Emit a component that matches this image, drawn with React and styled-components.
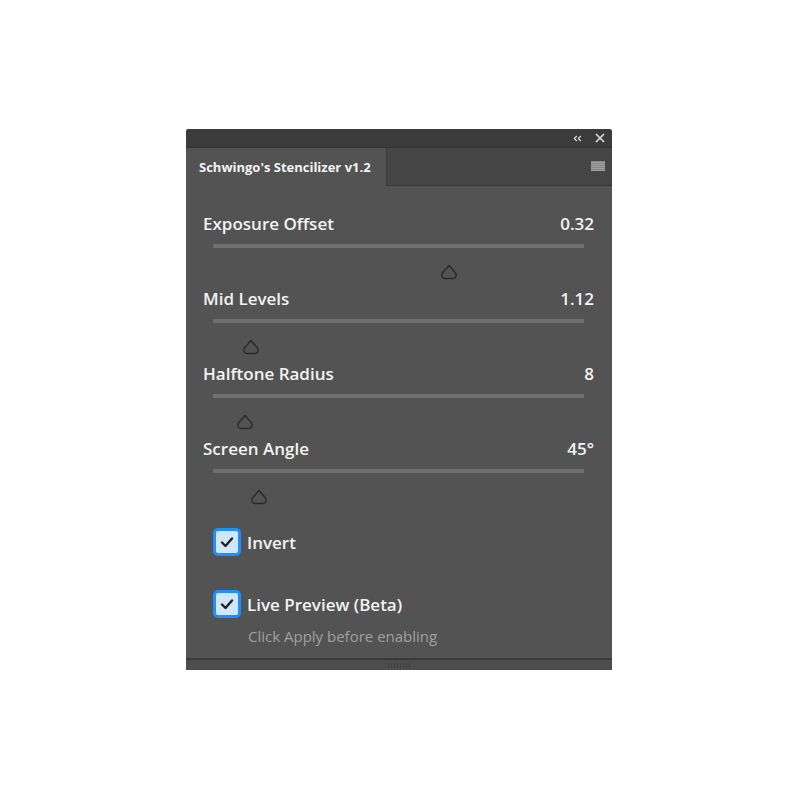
import React from 'react';
import styled, { createGlobalStyle } from 'styled-components';

const GlobalStyle = createGlobalStyle`
  body {
    margin: 0;
    background: #ffffff;
    font-family: "Open Sans", "Noto Sans", sans-serif;
  }
`;

const Page = styled.div`
  width: 800px;
  height: 800px;
  padding: 129px 0 0 186px;
  box-sizing: border-box;
`;

const Panel = styled.div`
  width: 426px;
  height: 541px;
  background: #535353;
  display: flex;
  flex-direction: column;
  border-radius: 3px 3px 0 0;
  overflow: hidden;
`;

const TopBar = styled.div`
  height: 18px;
  background: #3b3b3b;
  border-bottom: 1px solid #333333;
  display: flex;
  align-items: center;
  justify-content: flex-end;
  gap: 13px;
  padding-right: 7px;
  color: #d8d8d8;
`;

const TabRow = styled.div`
  height: 38px;
  display: flex;
  background: #454545;
`;

const Tab = styled.div`
  width: 200px;
  background: #535353;
  color: #f2f2f2;
  font-weight: 700;
  font-size: 13px;
  display: flex;
  align-items: center;
  padding-left: 13px;
  box-sizing: border-box;
`;

const TabFill = styled.div`
  flex: 1;
  border-left: 1px solid #393939;
  border-bottom: 1px solid #393939;
  display: flex;
  align-items: center;
  justify-content: flex-end;
  padding-right: 7px;
`;

const Body = styled.div`
  flex: 1;
  padding: 27px 18px 0 17px;
  display: flex;
  flex-direction: column;
`;

const SliderBlock = styled.div`
  display: flex;
  flex-direction: column;
  height: 75px;
`;

const LabelRow = styled.div`
  display: flex;
  justify-content: space-between;
  color: #f2f2f2;
  font-size: 17px;
  font-weight: 600;
  line-height: 22px;
`;

const Track = styled.div`
  margin: 9px 10px 0;
  height: 4px;
  background: #707070;
`;

const ThumbArea = styled.div`
  position: relative;
  margin: 0 10px;
  height: 40px;
`;

const Thumb = styled.svg`
  position: absolute;
  top: 16px;
  transform: translateX(-50%);
`;

const CheckRow = styled.label`
  display: flex;
  align-items: center;
  gap: 6px;
  margin-left: 10px;
  margin-top: ${(p) => p.$top}px;
  color: #f2f2f2;
  font-size: 17px;
  font-weight: 600;
`;

const Box = styled.span`
  width: 28px;
  height: 28px;
  box-sizing: border-box;
  border: 3px solid #1e8fff;
  border-radius: 5px;
  background: #cfe6fb;
  display: flex;
  align-items: center;
  justify-content: center;
`;

const Hint = styled.div`
  margin-left: 45px;
  margin-top: 8px;
  color: #a0a0a0;
  font-size: 15px;
`;

const Footer = styled.div`
  height: 10px;
  background: #4d4d4d;
  border-top: 2px solid #3a3a3a;
  display: flex;
  justify-content: center;
  align-items: center;
`;

const Grip = styled.div`
  width: 24px;
  height: 5px;
  margin-left: 1px;
  background: repeating-linear-gradient(90deg, #3e3e3e 0 1px, transparent 1px 3px);
`;

const sliders = [
  { label: 'Exposure Offset', value: '0.32', pos: 0.636 },
  { label: 'Mid Levels', value: '1.12', pos: 0.102 },
  { label: 'Halftone Radius', value: '8', pos: 0.086 },
  { label: 'Screen Angle', value: '45°', pos: 0.124 },
];

const Check = () => (
  <svg width="14" height="12" viewBox="0 0 14 12">
    <path d="M2 6.5 L5.5 10 L12 2.5" fill="none" stroke="#222" strokeWidth="2.4" strokeLinecap="round" strokeLinejoin="round" />
  </svg>
);

const App = () => {
  return (
    <Page>
      <GlobalStyle />
      <Panel>
        <TopBar>
          <svg width="9" height="7" viewBox="0 0 9 7">
            <path d="M3.8 1 L1.3 3.5 L3.8 6 M7.8 1 L5.3 3.5 L7.8 6" fill="none" stroke="#dcdcdc" strokeWidth="1.2" />
          </svg>
          <svg width="10" height="10" viewBox="0 0 10 10">
            <path d="M1 1 L9 9 M9 1 L1 9" stroke="#dcdcdc" strokeWidth="1.6" />
          </svg>
        </TopBar>
        <TabRow>
          <Tab>Schwingo's Stencilizer v1.2</Tab>
          <TabFill>
            <svg width="14" height="11" viewBox="0 0 14 11">
              {[0.5, 2.5, 4.5, 6.5, 8.5].map((y) => (
                <rect key={y} x="0" y={y} width="14" height="1.2" fill="#c8c8c8" />
              ))}
            </svg>
          </TabFill>
        </TabRow>
        <Body>
          {sliders.map((s) => (
            <SliderBlock key={s.label}>
              <LabelRow>
                <span>{s.label}</span>
                <span>{s.value}</span>
              </LabelRow>
              <Track />
              <ThumbArea>
                <Thumb width="18" height="16" viewBox="0 0 18 16" style={{ left: `${s.pos * 100}%` }}>
                  <path
                    d="M9 1.5 L15.8 9.2 Q17.2 14.5 12.5 14.5 H5.5 Q0.8 14.5 2.2 9.2 Z"
                    fill="none"
                    stroke="#2a2a2a"
                    strokeWidth="1.4"
                    strokeLinejoin="round"
                  />
                </Thumb>
              </ThumbArea>
            </SliderBlock>
          ))}
          <CheckRow $top={15}>
            <Box><Check /></Box>
            Invert
          </CheckRow>
          <CheckRow $top={34}>
            <Box><Check /></Box>
            Live Preview (Beta)
          </CheckRow>
          <Hint>Click Apply before enabling</Hint>
        </Body>
        <Footer>
          <Grip />
        </Footer>
      </Panel>
    </Page>
  );
};

export default App;
